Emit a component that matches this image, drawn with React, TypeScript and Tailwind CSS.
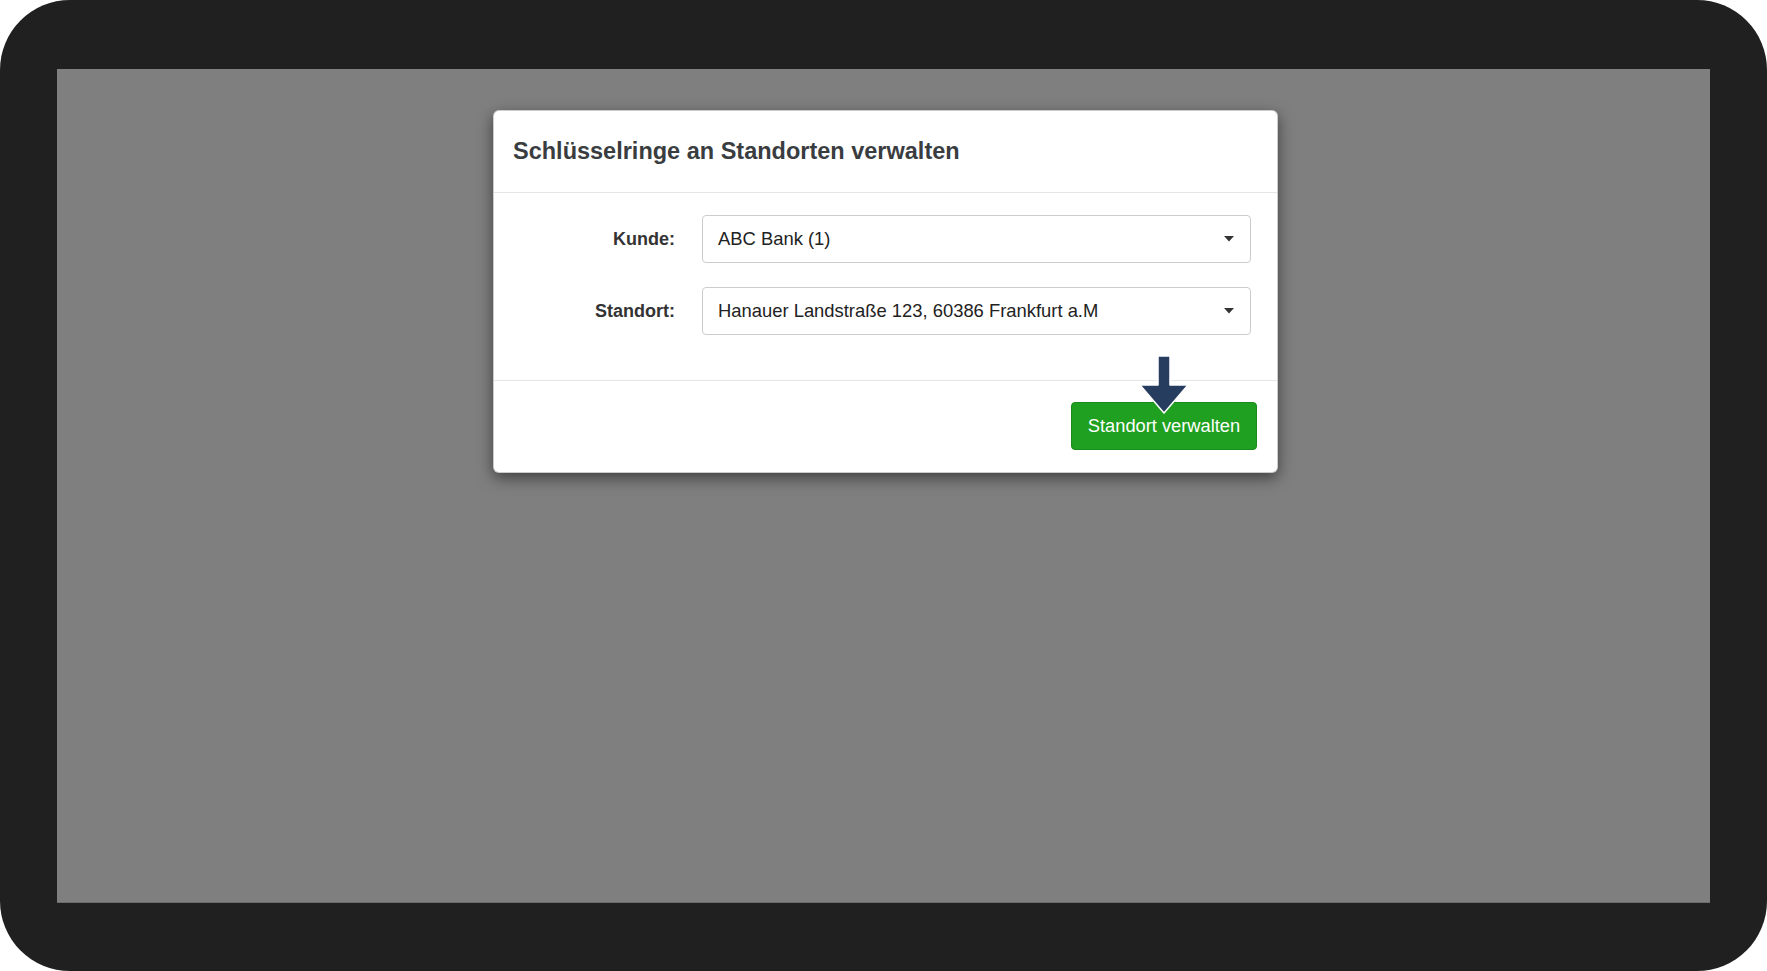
import React from "react";

function Caret() {
  return (
    <svg width="10" height="6" viewBox="0 0 10 6" className="shrink-0">
      <path d="M0 0 H10 L5 5.5 Z" fill="#333" />
    </svg>
  );
}

function SelectBox({ value }: { value: string }) {
  return (
    <div className="flex h-[48px] w-[549px] items-center justify-between rounded-[4px] border border-[#cccccc] bg-white pl-[15px] pr-[16px]">
      <span className="text-[18.4px] text-[#222]">{value}</span>
      <Caret />
    </div>
  );
}

export default function App() {
  return (
    <div
      className="h-[971px] w-[1767px] bg-white"
      style={{ fontFamily: '"Liberation Sans", Arial, sans-serif' }}
    >
      <div className="flex h-full w-full flex-col rounded-[70px] bg-[#212021] px-[57px] pb-[68px] pt-[69px]">
        <div className="flex flex-1 flex-col items-start border-b border-[#6c6c6c] bg-[#7f7f7f]">
          <div className="ml-[436px] mt-[41px] w-[785px] rounded-[6px] border border-[rgba(0,0,0,0.2)] bg-white shadow-[0_5px_15px_rgba(0,0,0,0.5)]">
            <div className="flex h-[82px] items-center border-b border-[#e5e5e5] px-[19px]">
              <h1 className="text-[23.5px] font-bold text-[#3a3d3f]">
                Schlüsselringe an Standorten verwalten
              </h1>
            </div>
            <div className="flex flex-col gap-[24px] pb-[45px] pt-[22px]">
              <div className="flex items-center">
                <label className="w-[181px] text-right text-[18px] font-bold text-[#333]">
                  Kunde:
                </label>
                <div className="ml-[27px]">
                  <SelectBox value="ABC Bank (1)" />
                </div>
              </div>
              <div className="flex items-center">
                <label className="w-[181px] text-right text-[18px] font-bold text-[#333]">
                  Standort:
                </label>
                <div className="ml-[27px]">
                  <SelectBox value="Hanauer Landstraße 123, 60386 Frankfurt a.M" />
                </div>
              </div>
            </div>
            <div className="relative flex justify-end border-t border-[#e5e5e5] pb-[22px] pr-[20px] pt-[21px]">
              <button className="flex h-[48px] w-[186px] items-center justify-center rounded-[4px] border border-[#1a8a1a] bg-[#20a020] text-[18.3px] text-white">
                Standort verwalten
              </button>
              <svg
                width="52"
                height="62"
                viewBox="0 0 52 62"
                className="absolute left-[644px] top-[-27px]"
              >
                <path
                  d="M20 2 H32 V31 H50 L26 59 L2 31 H20 Z"
                  fill="#263d60"
                  stroke="#ffffff"
                  strokeWidth="1.5"
                  strokeLinejoin="round"
                />
              </svg>
            </div>
          </div>
        </div>
      </div>
    </div>
  );
}
